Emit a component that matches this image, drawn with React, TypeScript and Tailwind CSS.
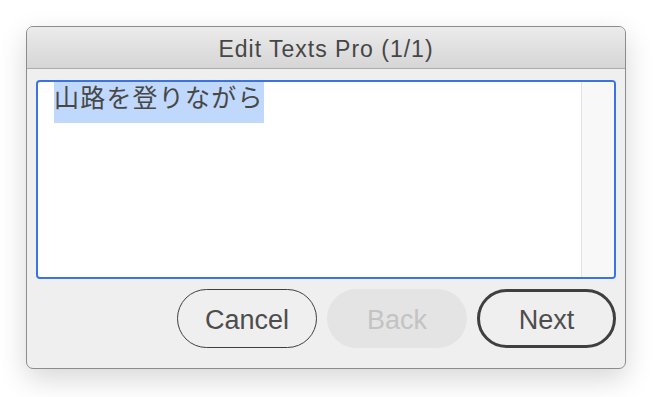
export default function App() {
  return (
    <div className="h-[397px] w-[653px] bg-white pl-[26px] pt-[26px] font-['Liberation_Sans','Noto_Sans_CJK_JP',sans-serif]">
      <div className="flex h-[343px] w-[600px] flex-col overflow-hidden rounded-[7px] border border-[#8c8c8c] bg-[#efefef] shadow-[0_10px_28px_rgba(0,0,0,0.16)]">
        <div className="flex h-[42px] shrink-0 items-center justify-center border-b border-[#ababab] bg-gradient-to-b from-[#ebebeb] to-[#d6d6d6] pt-[3px] text-[23px] tracking-[1px] text-[#464646]">
          Edit Texts Pro (1/1)
        </div>
        <div className="flex flex-1 flex-col px-[9px] pt-[11px]">
          <div className="flex h-[199px] overflow-hidden rounded-[4px] border-2 border-[#3a74e4] bg-white">
            <div className="flex-1 pl-[16px]">
              <span className="inline-block bg-[#bfd8fb] pb-[13px] font-['Noto_Sans_CJK_JP',sans-serif] text-[25px] leading-[28px] tracking-[1.2px] text-[#474747]">
                山路を登りながら
              </span>
            </div>
            <div className="w-[33px] border-l border-[#e3e3e3] bg-[#f8f8f8]" />
          </div>
          <div className="mt-[10px] flex justify-end gap-[10px]">
            <button className="h-[59px] w-[140px] rounded-full border-[1.5px] border-[#3f3f3f] pt-[3px] text-[27px] text-[#4d4d4d]">
              Cancel
            </button>
            <button className="h-[59px] w-[140px] rounded-full bg-[#e4e4e4] pt-[3px] text-[27px] text-[#c3c3c3]">
              Back
            </button>
            <button className="h-[59px] w-[139px] rounded-full border-[3px] border-[#3f3f3f] pt-[3px] text-[27px] text-[#4d4d4d]">
              Next
            </button>
          </div>
        </div>
      </div>
    </div>
  );
}
